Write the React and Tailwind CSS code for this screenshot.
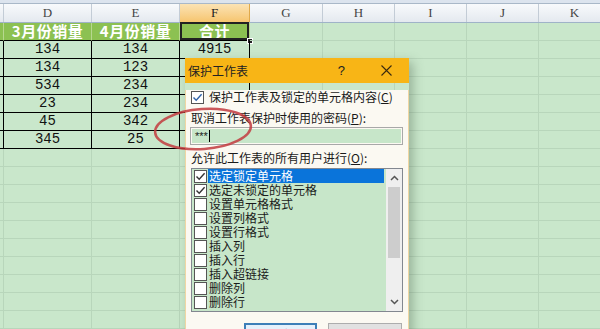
import React from "react";

const COLS = [
  { key: "C", w: 4 },
  { key: "D", w: 88 },
  { key: "E", w: 88 },
  { key: "F", w: 70 },
  { key: "G", w: 73 },
  { key: "H", w: 72 },
  { key: "I", w: 72 },
  { key: "J", w: 72 },
  { key: "K", w: 72 },
];

const DATA = [
  ["", "3月份销量", "4月份销量", "合计"],
  ["", "134", "134", "4915"],
  ["", "134", "123", ""],
  ["", "534", "234", ""],
  ["", "23", "234", ""],
  ["", "45", "342", ""],
  ["", "345", "25", ""],
];

const OPTIONS = [
  { label: "选定锁定单元格", checked: true, active: true },
  { label: "选定未锁定的单元格", checked: true },
  { label: "设置单元格格式" },
  { label: "设置列格式" },
  { label: "设置行格式" },
  { label: "插入列" },
  { label: "插入行" },
  { label: "插入超链接" },
  { label: "删除列" },
  { label: "删除行" },
];

const cjk = { fontFamily: '"Noto Sans CJK SC", sans-serif' };

function Check({ color = "#333" }) {
  return (
    <svg width="11" height="11" viewBox="0 0 11 11">
      <path d="M1.5 5.5 L4.2 8.3 L9.6 2.2" fill="none" stroke={color} strokeWidth="1.4" />
    </svg>
  );
}

function Box({ checked, color }) {
  return (
    <div className="w-[13px] h-[13px] shrink-0 bg-white border border-[#555] flex items-center justify-center">
      {checked && <Check color={color} />}
    </div>
  );
}

function Cell({ row, col, w }) {
  const inTable = row < DATA.length && col < 4;
  const value = inTable ? DATA[row][col] : "";
  const green = row === 0 && inTable;
  let cls = "h-[18px] shrink-0 border-b border-r flex items-center justify-center relative ";
  if (green) cls += "bg-[#8cc152] border-b-black border-r-[#b7d88f] text-white font-bold text-[15px] tracking-[0.5px]";
  else if (inTable) cls += "border-black text-[#111] text-[14px]";
  else cls += "border-[#b8d6bb]";
  return (
    <div
      className={cls}
      style={{ width: w, fontFamily: green ? cjk.fontFamily : '"Liberation Mono", monospace' }}
    >
      {value}
      {row === 0 && col === 3 && (
        <>
          <div className="absolute inset-0 -top-px border-2 border-[#222]" />
          <div className="absolute -right-[4px] -bottom-[4px] w-[6px] h-[6px] bg-[#222] border border-white" />
        </>
      )}
    </div>
  );
}

function Sheet() {
  return (
    <div className="w-[611px] bg-[#c9e7cb]">
      <div className="h-[4px] bg-[#dce4ee] border-b border-[#a9b8c8]" />
      <div className="flex h-[19px] border-b border-[#9fb3c8]">
        {COLS.map((c) => (
          <div
            key={c.key}
            className={
              "shrink-0 flex items-center justify-center border-r text-[13px] " +
              (c.key === "F"
                ? "bg-gradient-to-b from-[#fbe3b4] to-[#f6c56e] border-[#e0a94a] text-[#222]"
                : "bg-gradient-to-b from-[#f8fafc] to-[#e4e9ef] border-[#c3ccd6] text-[#444]")
            }
            style={{ width: c.w, fontFamily: '"Liberation Serif", serif' }}
          >
            {c.key === "C" ? "" : c.key}
          </div>
        ))}
      </div>
      {Array.from({ length: 17 }).map((_, r) => (
        <div key={r} className="flex">
          {COLS.map((c, ci) => (
            <Cell key={c.key} row={r} col={ci} w={c.w} />
          ))}
        </div>
      ))}
    </div>
  );
}

function Dialog() {
  return (
    <div
      className="absolute left-[185px] top-[58px] w-[224px] shadow-[4px_4px_10px_rgba(60,80,60,0.35)]"
      style={cjk}
    >
      <div className="h-[25px] bg-[#f8b516] flex items-center pl-[3px] pr-[17px] text-[#222]">
        <span className="text-[12px]">保护工作表</span>
        <span className="ml-auto text-[13px]" style={{ fontFamily: '"Liberation Sans", sans-serif' }}>?</span>
        <svg className="ml-[36px]" width="11" height="11" viewBox="0 0 11 11">
          <path d="M0.5 0.5 L10.5 10.5 M10.5 0.5 L0.5 10.5" stroke="#3a2a10" strokeWidth="1.1" />
        </svg>
      </div>
      <div className="h-[246px] bg-[#fbf9f2] border-x border-[#efd6a2] pl-[4px] pr-[5px] text-[12px] text-[#1a1a1a]">
        <div className="mt-[7px] h-[14px] flex items-center ml-[1px]">
          <Box checked color="#2f62a8" />
          <span className="ml-[5px] leading-[14px]">
            保护工作表及锁定的单元格内容(<span className="underline">C</span>)
          </span>
        </div>
        <div className="mt-[7px] h-[14px] leading-[14px] ml-[1px]">
          取消工作表保护时使用的密码(<span className="underline">P</span>):
        </div>
        <div className="mt-[2px] h-[18px] border border-[#a8a8a8] p-px">
          <div className="h-full bg-[#c7e6c9] flex items-center pl-[3px]">
            <span className="text-[11px] leading-none" style={{ fontFamily: '"Liberation Sans", sans-serif' }}>***</span>
            <span className="ml-px w-px h-[12px] bg-black" />
          </div>
        </div>
        <div className="mt-[6px] h-[14px] leading-[14px] ml-[1px]">
          允许此工作表的所有用户进行(<span className="underline">O</span>):
        </div>
        <div className="mt-[3px] ml-[1px] h-[144px] border border-[#828790] bg-[#c7e6c9] flex">
          <div className="flex-1 flex flex-col">
            {OPTIONS.map((o) => (
              <div key={o.label} className="h-[14px] flex items-center pl-[2px]">
                <Box checked={o.checked} />
                <span
                  className={
                    "ml-[1px] mr-[2px] flex-1 h-[14px] leading-[14px] pl-[1px] " +
                    (o.active ? "bg-[#0a74da] text-white" : "")
                  }
                >
                  {o.label}
                </span>
              </div>
            ))}
          </div>
          <div className="w-[16px] bg-[#efefef] flex flex-col items-center">
            <div className="h-[18px] flex items-center justify-center">
              <svg width="9" height="6" viewBox="0 0 9 6">
                <path d="M1 5 L4.5 1.5 L8 5" fill="none" stroke="#555" strokeWidth="1.5" />
              </svg>
            </div>
            <div className="w-[12px] h-[71px] bg-[#cdcdcd]" />
            <div className="mt-auto h-[18px] flex items-center justify-center">
              <svg width="9" height="6" viewBox="0 0 9 6">
                <path d="M1 1 L4.5 4.5 L8 1" fill="none" stroke="#555" strokeWidth="1.5" />
              </svg>
            </div>
          </div>
        </div>
        <div className="mt-[11px] flex justify-end gap-[11px] pr-[1px]">
          <div className="w-[73px] h-[23px] border-2 border-[#3d7fb8] bg-[#e5f1fb] flex items-center justify-center">
            确定
          </div>
          <div className="w-[74px] h-[23px] border border-[#adadad] bg-[#e1e1e1] flex items-center justify-center">
            取消
          </div>
        </div>
      </div>
    </div>
  );
}

export default function App() {
  return (
    <div className="relative w-[600px] h-[329px] overflow-hidden bg-[#c9e7cb]">
      <Sheet />
      <Dialog />
      <svg className="absolute left-[150px] top-[104px]" width="108" height="52" viewBox="0 0 108 52">
        <ellipse
          cx="53"
          cy="25"
          rx="48"
          ry="20"
          transform="rotate(-4 53 25)"
          fill="none"
          stroke="#c23b40"
          strokeWidth="2.5"
          opacity="0.85"
        />
      </svg>
    </div>
  );
}
